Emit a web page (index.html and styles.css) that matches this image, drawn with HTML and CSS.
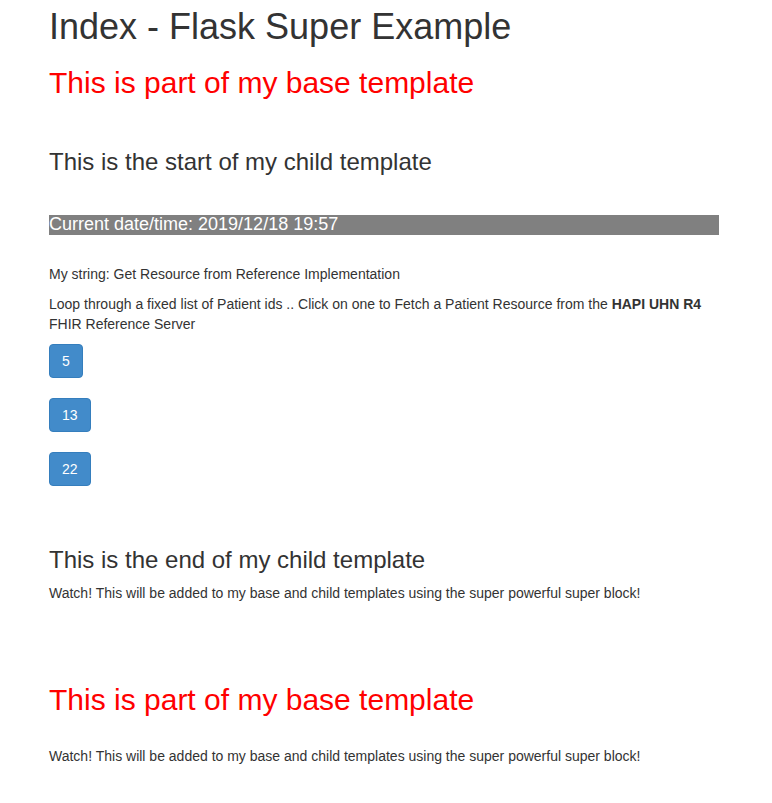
FILE: index.html
```html
<!DOCTYPE html>
<html lang="en">
<head>
<meta charset="utf-8">
<title>Index - Flask Super Example</title>
<link rel="stylesheet" href="styles.css">
</head>
<body>
<div class="container">
  <h1 class="page-title">Index - Flask Super Example</h1>
  <h2 class="base-heading base-top">This is part of my base template</h2>
  <h3 class="child-heading child-start">This is the start of my child template</h3>
  <h4 class="date-bar">Current date/time: 2019/12/18 19:57</h4>
  <p class="text my-string">My string: Get Resource from Reference Implementation</p>
  <p class="text loop-text">Loop through a fixed list of Patient ids .. Click on one to Fetch a Patient Resource from the <b>HAPI UHN R4</b> FHIR Reference Server</p>
  <div class="patient-list">
    <button class="btn-primary" type="button">5</button>
    <button class="btn-primary" type="button">13</button>
    <button class="btn-primary" type="button">22</button>
  </div>
  <h3 class="child-heading child-end">This is the end of my child template</h3>
  <p class="text">Watch! This will be added to my base and child templates using the super powerful super block!</p>
  <h2 class="base-heading base-bottom">This is part of my base template</h2>
  <p class="text watch-bottom">Watch! This will be added to my base and child templates using the super powerful super block!</p>
</div>
</body>
</html>
```
FILE: styles.css
```css
html, body {
  margin: 0;
  padding: 0;
  background: #fff;
}
body {
  font-family: "Liberation Sans", Arial, Helvetica, sans-serif;
  font-size: 14px;
  line-height: 20px;
  color: #333;
}
.container {
  width: 670px;
  margin-left: 49px;
  display: flow-root;
}
.page-title {
  font-size: 36px;
  font-weight: 500;
  line-height: 1.1;
  margin: 7px 0 0;
  color: #333;
}
.base-heading {
  font-size: 30px;
  font-weight: 500;
  line-height: 1.1;
  color: #ff0000;
  margin: 0;
}
.base-top {
  margin-top: 19px;
}
.base-bottom {
  margin-top: 80px;
}
.child-heading {
  font-size: 24px;
  font-weight: 500;
  line-height: 1.1;
  color: #333;
  margin: 0;
}
.child-start {
  margin-top: 50px;
}
.child-end {
  margin-top: 61px;
}
.date-bar {
  font-size: 18px;
  font-weight: 500;
  line-height: 1.1;
  margin: 40px 0 0;
  background: #808080;
  color: #fff;
}
.text {
  margin: 10px 0 0;
}
.my-string {
  margin-top: 29px;
}
.watch-bottom {
  margin-top: 30px;
}
.patient-list {
  display: flex;
  flex-direction: column;
  align-items: flex-start;
  gap: 20px;
  margin-top: 10px;
}
.btn-primary {
  font-family: inherit;
  font-size: 14px;
  line-height: 20px;
  padding: 6px 12px;
  border: 1px solid #357ebd;
  border-radius: 4px;
  background: #428bca;
  color: #fff;
  cursor: pointer;
}
```
